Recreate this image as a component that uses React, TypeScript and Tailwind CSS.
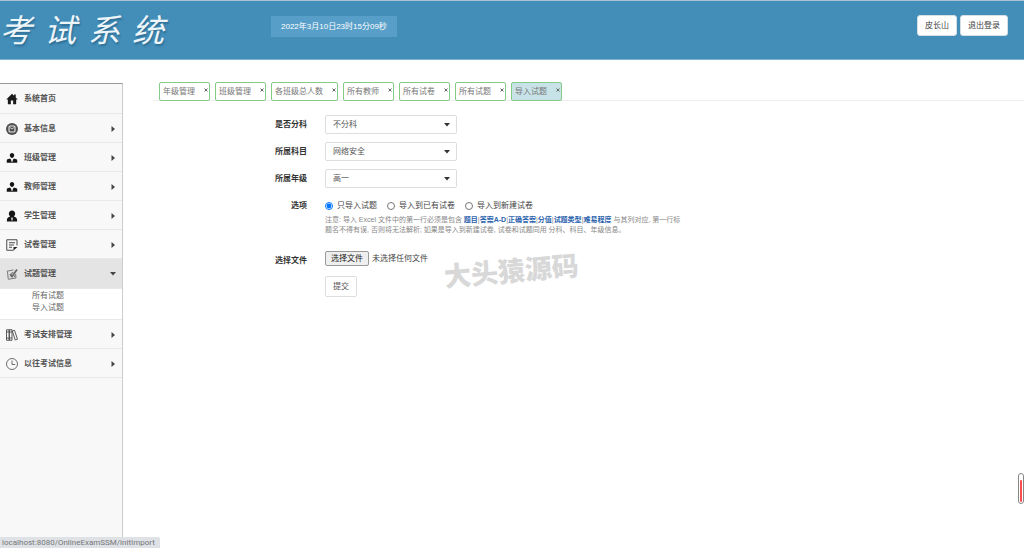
import { ReactNode } from "react";

interface MenuItem {
  label: string;
  icon: ReactNode;
  plain?: boolean;
  children?: string[];
}

const svgProps = { viewBox: "0 0 24 24", className: "size-3 shrink-0", "aria-hidden": true };

const HomeIcon = () => (
  <svg {...svgProps} fill="#1a1a1a">
    <path d="M12 1.5 0.5 13h3.2v9.5h6V15h4.6v7.5h6V13h3.2L19.5 9V3h-3.3v2.7z" />
  </svg>
);

const InfoIcon = () => (
  <svg {...svgProps} fill="none">
    <circle cx="12" cy="12" r="12" fill="#4f4f4f" />
    <rect x="6" y="6" width="12" height="12" rx="2.5" stroke="#e8e8e8" strokeWidth="2.2" />
    <path d="m8 9 4 3 4-3" stroke="#e8e8e8" strokeWidth="1.6" />
  </svg>
);

const TeacherIcon = () => (
  <svg {...svgProps} fill="#151515">
    <path d="M12 2c2.700 0 4.300 2 4.300 4.500S14.500 12 12 12 7.700 9 7.700 6.500 9.300 2 12 2z" />
    <path d="M1.500 21.500V17c0-2 2-3 6.500-4l4 4.500 4-4.500c4.500 1 6.500 2 6.500 4v4.500z" />
    <path d="m12 14.500 1.500 1.500-.8 4h-1.400l-.8-4z" fill="#fff" />
  </svg>
);

const StudentIcon = () => (
  <svg {...svgProps} fill="#151515">
    <path d="M12 .8c4 0 6.300 2.700 6.300 6.200 0 2.700-1.300 4.700-2.800 5.800 4 .9 6.700 3.200 6.700 7.200v3.200H1.800V20c0-4 2.700-6.300 6.700-7.200C7 11.700 5.700 9.700 5.700 7 5.700 3.500 8 .8 12 .8z" />
    <path d="m10.300 14.500 1.700 1.700 1.700-1.700-.8 6.500h-1.800z" fill="#fff" />
  </svg>
);

const PaperIcon = () => (
  <svg {...svgProps} fill="none" stroke="#4a4a4a" strokeWidth="2">
    <path d="M22 13V1.500H1.500v21H15" />
    <path d="M6 7.500h12M6 12h10M6 16.500h6" />
    <path d="M15 23v-7h8z" fill="#222" stroke="none" />
  </svg>
);

const QuestionIcon = () => (
  <svg {...svgProps} fill="none" stroke="#777" strokeWidth="2">
    <path d="M1.500 6.500 15 4M3 7l1.500 15.500L20 20l-.8-8" />
    <path d="m8 12 4 5L22 3" stroke="#666" strokeWidth="3.500" />
    <path d="m8 17 5-9 5 11" stroke="#777" />
  </svg>
);

const BooksIcon = () => (
  <svg {...svgProps} fill="none" stroke="#4a4a4a" strokeWidth="1.8">
    <path d="M1 1.500h5.500v21H1zM6.500 1.500H12v21H6.500zM12.500 4l4.500-1.500L23 20.500 18.500 22z" />
    <path d="M1 6h11M1 18h11" />
  </svg>
);

const ClockIcon = () => (
  <svg {...svgProps} fill="none" stroke="#666" strokeWidth="1.9">
    <circle cx="12" cy="12" r="11" />
    <path d="M12 5v8h6.500" />
  </svg>
);

const menu: MenuItem[] = [
  { label: "系统首页", icon: <HomeIcon />, plain: true },
  { label: "基本信息", icon: <InfoIcon /> },
  { label: "班级管理", icon: <TeacherIcon /> },
  { label: "教师管理", icon: <TeacherIcon /> },
  { label: "学生管理", icon: <StudentIcon /> },
  { label: "试卷管理", icon: <PaperIcon /> },
  { label: "试题管理", icon: <QuestionIcon />, children: ["所有试题", "导入试题"] },
  { label: "考试安排管理", icon: <BooksIcon /> },
  { label: "以往考试信息", icon: <ClockIcon /> },
];

const tabs = ["年级管理", "班级管理", "各班级总人数", "所有教师", "所有试卷", "所有试题", "导入试题"];
const activeTab = "导入试题";

const selects = [
  { id: "division", label: "是否分科", options: ["不分科", "文科", "理科"] },
  { id: "subject", label: "所属科目", options: ["网络安全"] },
  { id: "grade", label: "所属年级", options: ["高一", "高二", "高三"] },
];

const importModes = ["只导入试题", "导入到已有试卷", "导入到新建试卷"];
const columns = ["题目", "答案A-D", "正确答案", "分值", "试题类型", "难易程度"];

const Header = () => (
  <header className="flex h-[60px] items-start border-t border-b border-t-[#a9c3d3] border-b-[#7fb2d1] bg-[#438eb9]">
    <h1 className="mt-2 flex w-[271px] shrink-0 gap-3 text-[32px] leading-[44px] font-normal text-[#eef5f9] italic [text-shadow:1px_2px_2px_#2d6d93]">
      {"考试系统".split("").map((char) => (
        <span key={char}>{char}</span>
      ))}
    </h1>
    <time className="mt-[15px] bg-[#579ec8] px-[10px] leading-[21px] text-white">2022年3月10日23时15分09秒</time>
    <div className="mt-[14px] mr-4 ml-auto flex gap-[3px]">
      {["皮长山", "退出登录"].map((label) => (
        <button key={label} className="h-[21px] rounded-[3px] border border-[#d5dfe6] bg-white px-[7px] text-[#444]">
          {label}
        </button>
      ))}
    </div>
  </header>
);

const Sidebar = () => (
  <nav className="mt-px w-[123px] shrink-0 border-t border-r border-t-[#999] border-r-[#ccc] bg-[#f8f8f8]">
    <ul>
      {menu.map((item) => (
        <li key={item.label}>
          <a
            href="#"
            className={`flex items-center gap-[6px] border-b border-[#e8e8e8] px-[6px] pt-px font-bold text-[#555] ${
              item.children ? "h-[30px] bg-[#e4e4e4]" : item.plain ? "h-[30px]" : "h-[29px]"
            }`}
          >
            {item.icon}
            <span>{item.label}</span>
            {!item.plain && (
              <svg viewBox="0 0 6 6" className="ml-auto size-[6px]" fill="#444" aria-hidden="true">
                <path d={item.children ? "M0 1h6L3 4.500z" : "M1.500 0v6L5 3z"} />
              </svg>
            )}
          </a>
          {item.children && (
            <ul className="h-[31px] border-b border-[#e8e8e8] bg-white pt-px pl-8">
              {item.children.map((child) => (
                <li key={child} className="leading-3">
                  <a href="#" className="block text-[#666]">
                    {child}
                  </a>
                </li>
              ))}
            </ul>
          )}
        </li>
      ))}
    </ul>
  </nav>
);

const Tabs = () => (
  <ul className="flex gap-[5px] border-b border-[#eee] pl-[6px]">
    {tabs.map((tab) => (
      <li
        key={tab}
        className={`relative -mb-px rounded-[2px] border border-[#84cb88] ${
          tab === activeTab ? "bg-[#c8e3e8]" : "bg-white"
        }`}
      >
        <a href="#" className="block pr-[14px] pl-[3px] leading-[17px] text-[#777]">
          {tab}
        </a>
        <button aria-label={`关闭${tab}`} className="absolute top-[5px] right-px text-[#666]">
          <svg viewBox="0 0 4 4" className="block size-1" stroke="currentColor" strokeWidth="1" aria-hidden="true">
            <path d="M.5.5l3 3M3.500.5l-3 3" />
          </svg>
        </button>
      </li>
    ))}
  </ul>
);

const labelClass = "w-[154px] shrink-0 text-right font-bold text-[#333]";

const ImportForm = () => (
  <form className="relative mt-[14px]">
    {selects.map((field) => (
      <div key={field.id} className="mb-2 flex items-center gap-[18px]">
        <label htmlFor={field.id} className={labelClass}>
          {field.label}
        </label>
        <div className="relative w-[132px]">
          <select
            id={field.id}
            className="block h-[19px] w-full appearance-none rounded-[2px] border border-[#ddd] bg-white px-[7px] text-[#555]"
          >
            {field.options.map((option) => (
              <option key={option}>{option}</option>
            ))}
          </select>
          <svg
            viewBox="0 0 6 4"
            className="pointer-events-none absolute top-2 right-[7px] h-1 w-[6px]"
            fill="#333"
            aria-hidden="true"
          >
            <path d="M0 0h6L3 3.500z" />
          </svg>
        </div>
      </div>
    ))}

    <div className="mt-3 flex gap-[18px]">
      <span id="mode" className={`${labelClass} leading-3`}>
        选项
      </span>
      <div>
        <div role="radiogroup" aria-labelledby="mode" className="flex gap-[10px] leading-3 text-[#444]">
          {importModes.map((mode, index) => (
            <label key={mode} className="flex items-center gap-1">
              <input type="radio" name="mode" defaultChecked={index === 0} className="size-2" />
              {mode}
            </label>
          ))}
        </div>
        <p className="mt-[3px] text-[7px] leading-[10px] text-[#888]">
          注意: 导入 Excel 文件中的第一行必须是包含{" "}
          {columns.map((column, index) => (
            <span key={column}>
              {index > 0 && "|"}
              <b className="text-[#2a62ac]">{column}</b>
            </span>
          ))}{" "}
          与其列对应, 第一行标
          <br />
          题名不得有误, 否则将无法解析; 如果是导入到新建试卷, 试卷和试题同用 分科、科目、年级信息。
        </p>
      </div>
    </div>

    <div className="mt-4 flex gap-[18px]">
      <span className={`${labelClass} leading-5`}>选择文件</span>
      <label className="flex h-[15px] items-center gap-[3px] text-[#444]">
        <input type="file" className="sr-only" />
        <span className="rounded-[2px] border border-[#999] bg-[#efefef] px-[5px] leading-[13px] text-[#222]">
          选择文件
        </span>
        未选择任何文件
      </label>
    </div>

    <button type="button" className="mt-[5px] ml-[172px] h-[21px] rounded-[2px] border border-[#ddd] bg-white px-[7px] text-[#555]">
      提交
    </button>

    <span className="pointer-events-none absolute top-[137px] left-[291px] -rotate-5 text-[27px] font-black text-[#d8d8d8]">
      大头猿源码
    </span>
  </form>
);

export default function App() {
  return (
    <div className="flex min-h-screen flex-col bg-white font-['Liberation_Sans','Noto_Sans_CJK_SC',sans-serif] text-[8px]">
      <Header />
      <div className="flex grow pt-[22px]">
        <Sidebar />
        <main className="ml-[30px] min-w-0 grow">
          <Tabs />
          <ImportForm />
        </main>
      </div>

      {/* Link hint in the corner */}
      <div className="fixed bottom-0 left-0 rounded-tr-[2px] bg-[#dee1e6] pr-[5px] pl-[2px] font-['Roboto',sans-serif] leading-[11px] text-[#777]">
        localhost:8080/OnlineExamSSM/initImport
      </div>

      {/* Level gauge on the right edge */}
      <div className="fixed right-0 bottom-11 flex h-[31px] w-[6px] flex-col justify-end rounded-[3px] border border-[#888] bg-white p-px">
        <div className="h-[22px] rounded-[1px] bg-[#ff4d4d]" />
      </div>
    </div>
  );
}
